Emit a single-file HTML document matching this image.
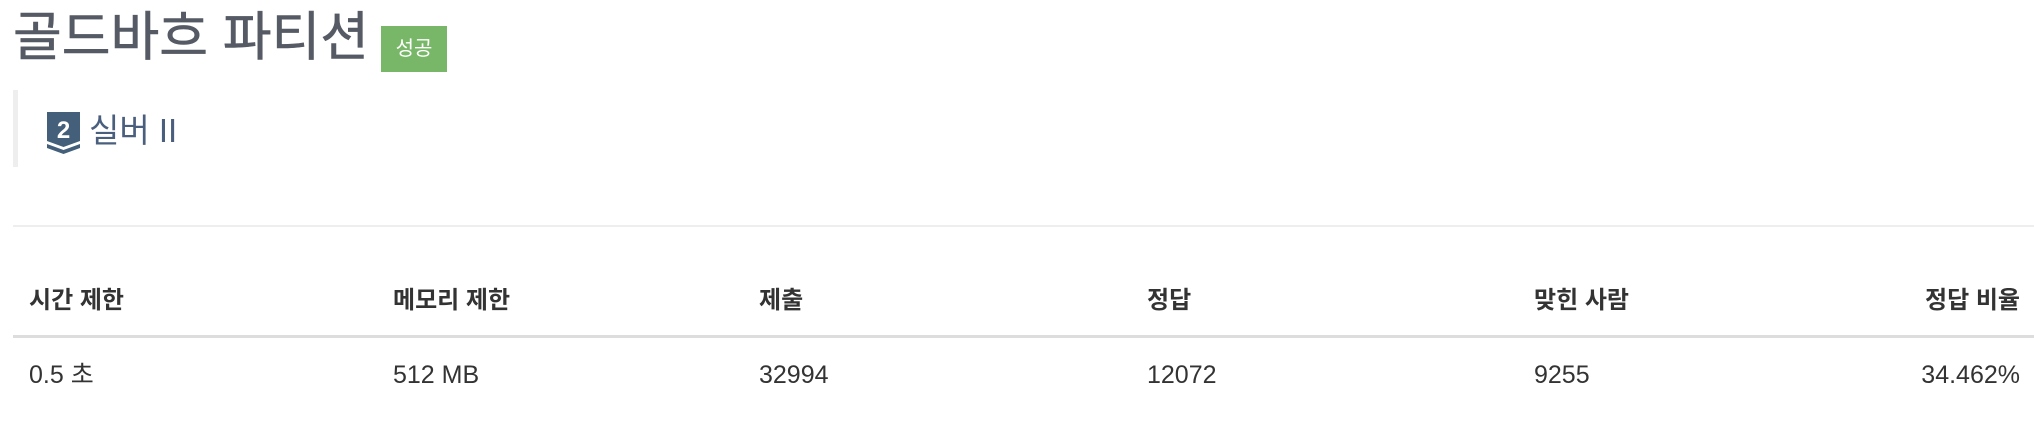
<!DOCTYPE html>
<html><head><meta charset="utf-8"><style>
body{margin:0;width:2034px;height:424px;background:#fff;position:relative;overflow:hidden;font-family:"Liberation Sans","Noto Sans CJK KR",sans-serif;}
.a{position:absolute;white-space:nowrap}
.title{left:13px;top:5px;font-size:53px;color:#555a64;line-height:66px;-webkit-text-stroke:0.6px #555a64}
.badge{left:381px;top:26px;width:66px;height:46px;background:#77b767;color:#fff;font-size:20px;line-height:46px;text-align:center}
.bq{left:13px;top:90px;width:5px;height:77px;background:#eee}
.tier{left:89px;top:107px;font-size:33px;color:#4a5f7e;line-height:48px}
.hr{left:13px;top:225px;width:2021px;height:2px;background:#eee}
.hb{left:13px;top:335px;width:2021px;height:3px;background:#ddd}
.h{top:286px;font-size:24px;font-weight:bold;color:#333;line-height:30px}
.d{top:360px;font-size:25px;color:#333;line-height:30px}
</style></head><body>
<div class="a title">골드바흐 파티션</div>
<div class="a badge">성공</div>
<div class="a bq"></div>
<svg class="a" style="left:46px;top:111px" width="35" height="43" viewBox="0 0 35 43">
<path d="M1 1H34V30L17.5 36L1 30Z" fill="#435f7a"/>
<path d="M1 33L17.5 39L34 33V37L17.5 43L1 37Z" fill="#435f7a"/>
<text x="17.5" y="27" font-size="24" font-weight="bold" fill="#fff" text-anchor="middle" font-family="Liberation Sans,sans-serif">2</text>
</svg>
<div class="a tier">실버 II</div>
<div class="a hr"></div>
<div class="a h" style="left:29px">시간 제한</div>
<div class="a h" style="left:393px">메모리 제한</div>
<div class="a h" style="left:759px">제출</div>
<div class="a h" style="left:1147px">정답</div>
<div class="a h" style="left:1534px">맞힌 사람</div>
<div class="a h" style="right:14px">정답 비율</div>
<div class="a hb"></div>
<div class="a d" style="left:29px">0.5 초</div>
<div class="a d" style="left:393px">512 MB</div>
<div class="a d" style="left:759px">32994</div>
<div class="a d" style="left:1147px">12072</div>
<div class="a d" style="left:1534px">9255</div>
<div class="a d" style="right:14px">34.462%</div>
</body></html>
